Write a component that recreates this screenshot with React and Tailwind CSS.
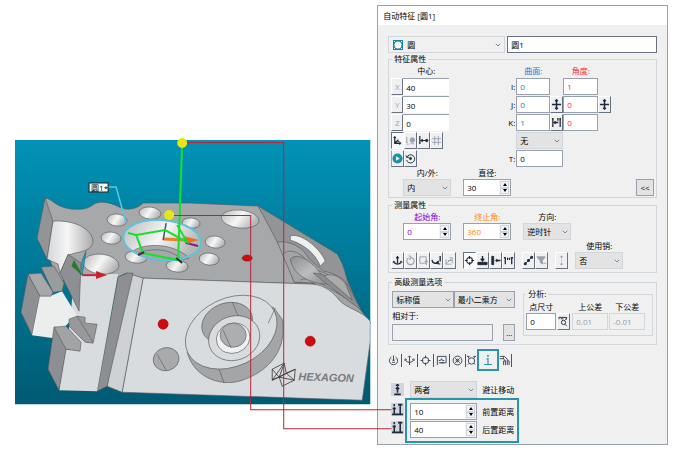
import { ChevronDown } from 'lucide-react'

// toolbar glyphs, all on a 12x12 grid
const ICONS = {
  axes: <><path d="M3 2v7h6M3 9l4-4" strokeWidth="1.4" /><path d="M1.5 3.5 3 1.5l1.5 2M8 7.5 10 9l-2 1.5M6 7h2" /></>,
  snap: <><path d="M2 2v6M1 8h2M2 10h2" /><circle cx="8" cy="5.500" r="2.5" fill="currentColor" /><path d="M6 9.5h4" /></>,
  span: <><path d="M2 1v8M1 9h2M4 6h6M5 4.5 3.5 6 5 7.5" strokeWidth="1.3" /><circle cx="9.500" cy="6" r="1.3" fill="currentColor" /></>,
  grid: <path d="M4 1v10M8 1v10M1 4h10M1 8h10" />,
  cycle: <><path d="M2 4.5A4.5 4.5 0 1 1 1.7 7.5" /><path d="M1 2.5 2 5l2.5-.5" /><circle cx="6" cy="6" r="1.2" fill="currentColor" /></>,
  move: <path d="M6 1v10M1 6h10M4.5 2.5 6 1l1.5 1.5M4.5 9.5 6 11l1.5-1.5" strokeWidth="1.6" />,
  flip: <path d="M2 1v10M10 1v10M1 2h2M9 2h2M4 6h4M5 4.500 3.500 6 5 7.500M7.500 1v3" strokeWidth="1.4" />,
  anchor: <><path d="M6 1v8M4.500 3h3M2 8c1 2.500 7 2.500 8 0" strokeWidth="1.4" /><path d="m1 8.500 1-2 1.500 1.500M11 8.500l-1-2-1.5 1.500" /></>,
  rotate: <path d="M4 3a4 4 0 1 0 4 0M4.500 .5 7 3 4.500 5" strokeWidth="1.2" />,
  region: <><path d="M2 2h7v7H2z" /><path d="M7 7h4M9 5v6" /></>,
  hook: <><path d="M1 5.5c1 4 4 4 6 3M10 1v6" strokeWidth="1.5" /><path d="M8 6.500V10L5.500 8.500zM9.500 9v1.500" fill="currentColor" /></>,
  probe: <><path d="M2 5v5h6M2 10l6-6M6 3h3v3" /><path d="M4 6h5v3" /></>,
  target: <><circle cx="6" cy="6" r="3.2" strokeWidth="1.2" /><path d="M6 1v3M6 8v3M1 6h3M8 6h3" strokeWidth="1.3" /></>,
  press: <><path d="M1 8h10v2.500H1z" fill="currentColor" /><path d="M6 1v5M4 4l2 2.500L8 4" strokeWidth="1.5" /></>,
  side: <><path d="M2 1.500h2v9H2z" fill="currentColor" /><path d="M8 4.500 6.500 6 8 7.500M6.500 6h5" strokeWidth="1.4" /></>,
  pair: <path d="M2.500 3v7M9.500 3v7M1 3h2M8.500 3H11M5 3v2.500M7 3v2.500" strokeWidth="1.4" />,
  points: <><path d="m2 10 8-8" /><path d="M1.500 8.500h2v2h-2zM5 5h2v2H5zM8.500 1.500h2v2h-2z" fill="currentColor" /></>,
  filter: <><path d="M1 2h9L7 6v4L4.500 8V6z" fill="currentColor" /><path d="M8 9h3" /></>,
  jump: <path d="M6 1v3M6 5.500v1M6 8v3M4.500 2.500 6 1l1.500 1.500M4.500 9.500 6 11l1.500-1.500" />,
  magnify: <><circle cx="6" cy="7" r="2.300" /><path d="m7.500 9 2 2M1 1.500h8M1 1.500v2M9 1v3M3 3h3M8 4l2-2" /></>,
  power: <><path d="M3.800 2.200a4.500 4.500 0 1 0 4.400 0" /><path d="M6 .5v6M4.500 5 6 6.500 7.500 5M4.500 8h3" /></>,
  paths: <path d="M6 11V1M4.500 2.500 6 1l1.500 1.500M1.500 5c0 3 4.500 2 4.500 4 0-2 4.500-1 4.500-4M.5 6l1-2 1.500 1.500M11.500 6l-1-2L9 5.500" />,
  locate: <><circle cx="6" cy="6" r="3.500" /><path d="M6 .5v3M6 8.500v3M.5 6h3M8.500 6h3" /></>,
  flag: <path d="M1.500 11V1.500h9.500v7H3M3 6h2l1-2 1 2h2M5 8.500h4" />,
  reel: <><circle cx="6" cy="6" r="4.800" /><path d="m3.500 3.500 5 5M8.500 3.500l-5 5" /><circle cx="6" cy="6" r="1.500" /></>,
  ring: <><circle cx="6" cy="6.500" r="3.500" /><path d="M1 1.500h3M8 1.500h3M2.500 2l1 2M9.500 2l-1 2M2 10.500l1.500-1.500M10 10.500 8.500 9" /></>,
  clear: <><path d="M2 10.500h8M6 4v6M4.500 5H6" strokeWidth="1.2" /><circle cx="6" cy="1.800" r=".6" fill="currentColor" /></>,
  robot: <path d="M1 1.500h5l3 3v2M1 4h4l2 3M5 1.500V4M5 11V6.500h2V11M9 11V6.500h2V11" />,
  single: <path d="M6 1v2M6 4v5M4.500 5.500 6 4l1.500 1.500M3 10.500h6M4.500 2h3" strokeWidth="1.4" />,
  height: <path d="M3 1v2M3 4v6M1.500 5h3M1 10.500h10M8.500 2v8M6.500 1.500h4" strokeWidth="1.4" />,
}

function Icon({ name, className = 'size-3' }) {
  return (
    <svg viewBox="0 0 12 12" className={className} fill="none" stroke="currentColor" aria-hidden="true">
      {ICONS[name]}
    </svg>
  )
}

function ToolButton({ name, label, dim, active }) {
  return (
    <button
      type="button"
      aria-label={label}
      className={`flex h-[17px] w-[13px] items-center justify-center border ${
        active ? 'border-t-gray-500 border-l-gray-500 border-r-white border-b-white bg-gray-50' : 'border-t-white border-l-white border-r-gray-500 border-b-gray-500'
      } ${dim ? 'text-gray-400' : 'text-gray-800'}`}
    >
      <Icon name={name} className="size-[11px] shrink-0" />
    </button>
  )
}

function Select({ label, value, className, tone = 'border-gray-300 bg-[#e3e3e3]' }) {
  return (
    <div className={`grid items-center ${className}`}>
      <select aria-label={label} className={`col-start-1 row-start-1 h-[17px] w-full appearance-none border pl-[3px] ${tone}`}>
        <option>{value}</option>
      </select>
      <ChevronDown className="pointer-events-none col-start-1 row-start-1 mr-[2px] size-2 justify-self-end text-gray-600" />
    </div>
  )
}

function TextBox({ label, value, className = '' }) {
  return (
    <input
      aria-label={label}
      defaultValue={value}
      className={`h-[17px] min-w-0 border border-gray-400 bg-white px-[3px] ${className}`}
    />
  )
}

function Spin({ label, value, className = 'w-12', color = '' }) {
  return (
    <div className={`flex h-[17px] border border-gray-400 bg-white ${className}`}>
      <input aria-label={label} defaultValue={value} className={`w-0 flex-1 px-[3px] ${color}`} />
      <div className="flex w-[11px] flex-col bg-gray-100 p-px">
        <button type="button" aria-label={`${label} +`} className="flex flex-1 items-center justify-center border border-gray-300">
          <svg viewBox="0 0 4 3" className="h-[3px] w-1"><path d="M0 3 2 0l2 3z" /></svg>
        </button>
        <button type="button" aria-label={`${label} -`} className="flex flex-1 items-center justify-center border border-gray-300">
          <svg viewBox="0 0 4 3" className="h-[3px] w-1"><path d="m0 0 2 3 2-3z" /></svg>
        </button>
      </div>
    </div>
  )
}

function Field({ label, color = '', children }) {
  return (
    <div className="flex flex-col">
      <span className={`h-3 text-center ${color}`}>{label}</span>
      {children}
    </div>
  )
}

const AXES = [['X', '40'], ['Y', '30'], ['Z', '0']]

const TOOLS = [
  [['anchor', '测针'], ['rotate', '旋转', true], ['region', '区域', true], ['hook', '回退'], ['probe', '探测', true]],
  [['target', '查找', false, true], ['press', '下压'], ['side', '侧向'], ['pair', '成对']],
  [['points', '点'], ['filter', '过滤', true]],
  [['jump', '跳转', true]],
]

const TABS = ['power', 'paths', 'locate', 'flag', 'reel']

const HOLES = [
  [117, 220, 10, 6], [150, 213, 11, 6], [191, 223, 9, 5], [111, 238, 10, 6],
  [136, 257, 11, 6], [177, 266, 11, 6], [215, 242, 10, 6], [209, 259, 10, 6], [240, 219, 19, 9],
]

function PartView() {
  return (
    <svg viewBox="15 140 355 264" className="relative h-auto w-full overflow-visible" role="img" aria-label="HEXAGON">
      <defs>
        <linearGradient id="sky" x1="0" y1="0" x2="0" y2="1">
          <stop offset="0" stopColor="#0093b7" />
          <stop offset="1" stopColor="#005a72" />
        </linearGradient>
        <linearGradient id="bore" x1="0" y1="0" x2="1" y2="0.3">
          <stop offset="0" stopColor="#b6b7b9" />
          <stop offset="0.55" stopColor="#f6f6f6" />
          <stop offset="1" stopColor="#b4b5b7" />
        </linearGradient>
        <linearGradient id="cove" x1="0" y1="0" x2="1" y2="0">
          <stop offset="0" stopColor="#d4d6d8" />
          <stop offset="0.45" stopColor="#f6f6f6" />
          <stop offset="1" stopColor="#a9aaac" />
        </linearGradient>
        <linearGradient id="pocket" x1="0" y1="0" x2="1" y2="1">
          <stop offset="0" stopColor="#8b8d90" />
          <stop offset="0.5" stopColor="#bcbdbf" />
          <stop offset="1" stopColor="#85878a" />
        </linearGradient>
        <clipPath id="view"><path d="M15 140h355v264H15z" /></clipPath>
      </defs>
      <path d="M15 140h355v264H15z" fill="url(#sky)" />

      <g clipPath="url(#view)" stroke="#55575a" strokeWidth=".6" strokeLinejoin="round">
        {/* top face */}
        <path d="M45 198c8 1 10 9 26 11 14 1 18-1 23-5 7-4 18-1 25 3 8 4 18 2 24-4l47 0 68 3 54 78-169-6-17-5-10 5-59 3-13-40z" fill="#a7a8aa" />
        {/* right flank */}
        <path d="M258 206 337 254c6 10 8 18 10 26l15 34 10 10-27-16-12-14-20-11-19-1-11-29z" fill="#929496" />
        <path d="M277 242c12-2 26 5 32 17l14 12c10 2 19 6 23 12l12 24 12 15-25-14-12-14-20-11-19-1z" fill="#a2a4a6" />
        <path d="M284 253c9-6 20 3 25 11 9 9 20 8 31 19M300 280c11-5 24 6 34 11l25 15" fill="none" />
        <path d="M290 236c10-4 30 12 35 25l-5 5c-5-13-17-22-30-26z" fill="#eeeff0" />
        <path d="M290 259c7-7 19 1 26 9 6 7 10 13 15 16-14 1-37-5-41-25z" fill="url(#pocket)" />
        <path d="M313 273c12 0 23 9 34 11l14 26-27-20z" fill="#8b8d90" />
        <path d="M324 276c7-4 16 1 21 7l7 17z" fill="#a9abad" />
        {/* front face */}
        <path d="m143 278 169 6c14 1 22 10 27 16 8 9 22 10 31 21v20l-8 59-240-8z" fill="#d9dcde" />
        <path d="m127 273 16 5-21 114-15-6z" fill="#cfd2d4" />
        <path d="m118 277 9-4 6 0-26 113-10 5z" fill="#8d8f92" />
        {/* left steps */}
        <path d="M82 274h36L97 391l-38-1 11-68 4-46z" fill="#d9dcde" stroke="none" />
        <path d="m45 198 8 23-6 38-10-21z" fill="#929496" />
        <path d="M53 221c17-1 38 5 40 20 0 9-13 11-18 12l-7 2-8 18-2-9-11-5z" fill="url(#cove)" />
        <path d="m68 254 13 9-2 48-19-38z" fill="#8d8f92" />
        <path d="m28 274 12 21-8 40-11-23z" fill="#8d8f92" />
        <path d="M40 295h12l10-4 17 28-9 2-16 17-22-3z" fill="#eceded" stroke="none" />
        <path d="m28 274 13-1 12 19-2 4H40z" fill="#a7a8aa" />
        <path d="m41 267 13-1 10 17-2 8-9 1z" fill="#999b9d" />
        <path d="m54 327 12 1 13 22-13-1-7 41-11-21z" fill="#8d8f92" />
        <path d="m54 327 12-1 15 16-1 9-14-2z" fill="#a1a3a5" />
        <path d="m69 319 8-3 8 1v6l12 1-4 19-8-1-16-16z" fill="#97999b" />
        <path d="m77 316 16 26" />

        {/* bores */}
        {HOLES.map(([cx, cy, rx, ry]) => (
          <ellipse key={`${cx}-${cy}`} cx={cx} cy={cy} rx={rx} ry={ry} fill="url(#bore)" transform={`rotate(6 ${cx} ${cy})`} />
        ))}
        <ellipse cx="101" cy="264" rx="18" ry="10" fill="url(#bore)" transform="rotate(6 101 264)" />
        <ellipse cx="162" cy="240" rx="39" ry="20" fill="url(#bore)" transform="rotate(5 162 240)" />
        <path d="M133 251c10-8 40-9 56 7-17 5-42 3-56-7z" fill="#a7a8aa" />
        <path d="M138 253c12-5 30-5 42 5" fill="none" />
        <ellipse cx="162" cy="240" rx="39" ry="20" fill="none" stroke="#5ec4d8" strokeWidth="2" transform="rotate(5 162 240)" />

        {/* boss */}
        <path d="M187 352c7 27 37 36 58 27 26-10 42-31 37-60l-9-12-70 28z" fill="#a3a5a7" />
        <ellipse cx="231" cy="332" rx="48" ry="34" fill="#d9dcde" transform="rotate(-25 231 332)" />
        <path d="m219 369 5 14M275 308l-7 15" />
        <ellipse cx="227" cy="323" rx="26" ry="20" fill="#a3a5a7" transform="rotate(-20 227 323)" />
        <path d="m232 302 7 16" />
        <ellipse cx="234" cy="338" rx="26" ry="22" fill="#d9dcde" transform="rotate(-20 234 338)" />
        <ellipse cx="233" cy="338" rx="17" ry="15" fill="#f1f1f1" transform="rotate(-20 233 338)" />
        <ellipse cx="233" cy="335" rx="13" ry="12" fill="#acaeb0" />
        <path d="m223 330 8 18" />
        <ellipse cx="166" cy="359" rx="13" ry="11.500" fill="#a8aaac" transform="rotate(-15 166 359)" />
        <path d="m157 354 9 16" />
        <g fill="#d10a10" stroke="#8d0a0e">
          <circle cx="163" cy="324" r="5" />
          <circle cx="310" cy="341" r="5" />
          <ellipse cx="247" cy="258" rx="5" ry="3" />
        </g>
      </g>

      {/* engraved mark */}
      <g fill="none" stroke="#333" strokeWidth=".8">
        <path d="m272 369 12-6 2 10 9-4-1 11-12 6-3-9-7 3zM272 369l7 8 15 3M284 363l-12 17 14-7 8 7M295 369l-16 8 5-14" />
      </g>
      <text x="298" y="380" transform="rotate(2 298 380)" className="font-['Liberation_Sans'] text-[11px] font-bold italic" fill="#777a7d">
        HEXAGON
      </text>

      {/* trihedrons */}
      <path d="M82 275h14" stroke="#c8232c" strokeWidth="2" />
      <path d="m96 271 11 4-11 4z" fill="#c8232c" />
      <path d="M82 275 74 261l-2 5 5 4z" fill="#287b2b" stroke="#287b2b" />
      <path d="m82 275 4-24-4 10-1 9" fill="#3f9fb5" stroke="#2b8096" />
      <path d="m163 239 22 1" stroke="#e8822a" strokeWidth="3" />
      <path d="m183 236 16 4-14 4z" fill="#e8701c" />
      <path d="m186 243 12 3" stroke="#7c2382" strokeWidth="2" />
      <path d="m163 240 3-17" stroke="#345a7c" strokeWidth="1.500" />

      {/* probe path */}
      <path d="M182 143l-4 117-35-7-7-18 29-5 22 12-10-17M128 233l8 2" fill="none" stroke="#16e02c" strokeWidth="2" />
      <path d="m176 258 6 5M138 255l6-3" stroke="#333" strokeWidth="2" />

      <path d="M108 187h8l10 36" fill="none" stroke="#5ec4e8" strokeWidth="1.500" />
      <path d="M89 183h19v9H89z" fill="#fff" stroke="#222" />
      <text x="91" y="191" className="text-[8px]">圆1*</text>

      {/* leaders to the distance fields */}
      <g fill="none" stroke="#b5263a" strokeWidth="1">
        <path d="M182 142.500h101.500v286H391" />
        <path d="M169 215.500h81.500v194H391" />
      </g>
      <circle cx="182" cy="143" r="5" fill="#e6e61a" />
      <circle cx="169" cy="215" r="5" fill="#e6e61a" />
    </svg>
  )
}

function FeatureGroup() {
  return (
    <fieldset className="h-[145px] border border-gray-300 px-[2px]">
      <legend className="ml-px px-[2px]">特征属性</legend>
      <div className="flex gap-[53px]">
        <div className="flex w-[58px] flex-col gap-px">
          <span className="h-3 pl-3 text-center">中心:</span>
          {AXES.map(([axis, value]) => (
            <div key={axis} className="flex">
              <button type="button" className="w-3 border border-t-white border-l-white border-r-gray-500 border-b-gray-500 text-gray-400">{axis}</button>
              <TextBox label={axis} value={value} className="flex-1 border-x-0 border-b-0" />
            </div>
          ))}
          <div className="flex">
            <ToolButton name="axes" label="坐标" active />
            <ToolButton name="snap" label="捕捉" dim />
            <ToolButton name="span" label="跨度" />
            <ToolButton name="grid" label="网格" dim />
          </div>
          <div className="flex">
            <button type="button" aria-label="测量" className="flex h-[17px] w-[13px] items-center justify-center border border-t-white border-l-gray-400 border-r-gray-500 border-b-gray-500">
              <svg viewBox="0 0 12 12" className="size-[11px] shrink-0">
                <circle cx="6" cy="6" r="5.500" fill="#1792a8" />
                <path d="M4.500 3.500 8.500 6l-4 2.500z" fill="#fff" />
              </svg>
            </button>
            <ToolButton name="cycle" label="重测" />
          </div>
        </div>

        <div className="grid grid-cols-[14px_34px_13px_35px_13px] content-start items-center gap-y-px">
          <span className="col-start-2 h-3 text-center text-sky-600">曲面:</span>
          <span className="col-start-4 h-3 text-center text-red-500">角度:</span>
          <span className="col-start-1 pr-px text-right">I:</span>
          <TextBox label="I" value="0" className="text-sky-600" />
          <TextBox label="角度 I" value="1" className="col-start-4 text-red-500" />
          <span className="col-start-1 pr-px text-right">J:</span>
          <TextBox label="J" value="0" className="text-sky-600" />
          <ToolButton name="move" label="移动" />
          <TextBox label="角度 J" value="0" className="text-red-500" />
          <ToolButton name="move" label="移动角度" />
          <span className="col-start-1 pr-px text-right">K:</span>
          <TextBox label="K" value="1" className="text-sky-600" />
          <ToolButton name="flip" label="翻转" />
          <TextBox label="角度 K" value="0" className="text-red-500" />
          <Select label="类型" value="无" className="col-span-2 col-start-2" />
          <span className="col-start-1 pr-px text-right">T:</span>
          <TextBox label="T" value="0" className="col-span-2" />
        </div>
      </div>

      <div className="flex items-end gap-3 pl-3">
        <Field label="内/外:"><Select label="内/外" value="内" className="w-12" /></Field>
        <Field label="直径:"><Spin label="直径" value="30" /></Field>
        <button type="button" className="ml-auto h-[17px] w-[18px] border border-gray-400 bg-[#e3e3e3]">&lt;&lt;</button>
      </div>
    </fieldset>
  )
}

function MeasureGroup() {
  return (
    <fieldset className="mt-px h-[74px] border border-gray-300 px-[2px]">
      <legend className="ml-px px-[2px]">测量属性</legend>
      <div className="flex gap-3 pl-3">
        <Field label="起始角:" color="text-purple-700"><Spin label="起始角" value="0" color="text-purple-700" /></Field>
        <Field label="终止角:" color="text-orange-400"><Spin label="终止角" value="360" color="text-orange-400" /></Field>
        <Field label="方向:"><Select label="方向" value="逆时针" className="w-12" /></Field>
      </div>
      <div className="flex items-end gap-[7px]">
        {TOOLS.map((group) => (
          <div key={group[0][0]} className="flex">
            {group.map(([name, label, dim, active]) => (
              <ToolButton key={name} name={name} label={label} dim={dim} active={active} />
            ))}
          </div>
        ))}
        <Field label="使用销:"><Select label="使用销" value="否" className="w-12" /></Field>
      </div>
    </fieldset>
  )
}

function AdvancedGroup() {
  return (
    <fieldset className="mt-[3px] h-[69px] border border-gray-300 px-[3px]">
      <legend className="px-[2px]">高级测量选项</legend>
      <div className="flex gap-2">
        <div className="flex w-[123px] flex-col pt-[3px]">
          <div className="flex">
            <Select label="标称" value="标称值" className="flex-1" tone="border-gray-400 bg-[#e3e3e3]" />
            <Select label="算法" value="最小二乘方" className="flex-1" tone="border-gray-400 bg-[#e3e3e3]" />
          </div>
          <label htmlFor="relative" className="my-[2px] h-3">相对于:</label>
          <div className="flex justify-between">
            <input id="relative" className="h-[17px] w-[101px] border border-gray-400" />
            <button type="button" className="w-3 border border-gray-400 bg-[#e3e3e3]">...</button>
          </div>
        </div>
        <fieldset className="h-12 flex-1 border border-gray-300 px-[2px]">
          <legend className="px-[2px]">分析:</legend>
          <div className="grid grid-cols-[30px_14px_36px_36px] gap-x-px pt-px">
            <span className="h-3 text-center">点尺寸</span>
            <span className="col-start-3 h-3 text-center">上公差</span>
            <span className="h-3 text-center">下公差</span>
            <TextBox label="点尺寸" value="0" />
            <ToolButton name="magnify" label="缩放" />
            <input aria-label="上公差" disabled defaultValue="0.01" className="min-w-0 border border-gray-300 px-[3px] text-gray-400" />
            <input aria-label="下公差" disabled defaultValue="-0.01" className="min-w-0 border border-gray-300 px-[3px] text-gray-400" />
          </div>
        </fieldset>
      </div>
    </fieldset>
  )
}

function TabBar() {
  return (
    <nav className="mt-1 -ml-[2px] flex h-[22px] items-center text-gray-700">
      {TABS.map((name) => (
        <button key={name} type="button" aria-label={name} className="flex h-[13px] w-4 items-center justify-center border-r border-gray-600">
          <Icon name={name} className="size-[11px] shrink-0" />
        </button>
      ))}
      <button type="button" aria-label="ring" className="w-[11px]"><Icon name="ring" className="size-[11px]" /></button>
      <button type="button" aria-label="clear" className="flex size-[22px] items-center justify-center border-2 border-[#2796aa] text-[#2796aa]">
        <Icon name="clear" />
      </button>
      <button type="button" aria-label="robot" className="flex h-[13px] w-[13px] items-center border-r border-gray-600">
        <Icon name="robot" className="size-[11px] shrink-0" />
      </button>
    </nav>
  )
}

function AvoidancePane() {
  return (
    <div className="mt-[10px] flex gap-px pb-px pl-[3px] whitespace-nowrap">
      <div className="flex w-[13px] flex-col gap-[5px] pt-[2px] text-gray-800">
        <Icon name="single" className="h-[13px] w-full bg-gray-300" />
        <Icon name="height" className="mt-[2px] h-[13px] w-full bg-gray-300" />
        <Icon name="height" className="h-[13px] w-full bg-gray-300" />
      </div>
      <div>
        <div className="flex items-center gap-[5px] pl-[5px]">
          <Select label="避让移动" value="两者" className="w-[67px]" />
          <span>避让移动</span>
        </div>
        <div className="flex flex-col gap-px border-2 border-[#2796aa] px-[3px] py-[3px]">
          <div className="flex items-center gap-[5px]">
            <Spin label="前置距离" value="10" className="w-[67px]" />
            <span>前置距离</span>
          </div>
          <div className="flex items-center gap-[5px]">
            <Spin label="后置距离" value="40" className="w-[67px]" />
            <span>后置距离</span>
          </div>
        </div>
      </div>
    </div>
  )
}

export default function App() {
  return (
    <main className="grid min-h-screen grid-cols-[11fr_9fr] items-start gap-[7px] bg-white pt-[5px] pr-[18px] pl-[15px] font-['Open_Sans','Noto_Sans_CJK_SC',sans-serif] text-[8px] leading-3 text-black">
      <figure className="relative z-10 pt-[135px]">
        <PartView />
      </figure>

      <section className="border border-gray-400 bg-[#f0f0f0]">
        <h1 className="h-[19px] bg-white px-[5px] leading-[19px]">自动特征 [圆1]</h1>
        <div className="px-[10px] pt-[11px]">
          <div className="flex gap-[2px]">
            <div className="flex w-[117px] items-center border border-gray-300 pl-1">
              <svg viewBox="0 0 10 10" className="size-[10px] shrink-0">
                <path d="M0 0h10v10H0z" fill="#16849c" />
                <circle cx="5" cy="5" r="3.500" fill="#fff" />
                <path d="M1 1h1v1H1zM8 1h1v1H8zM1 8h1v1H1zM8 8h1v1H8z" fill="#fff" />
              </svg>
              <Select label="特征类型" value="圆" className="-my-px flex-1" tone="border-transparent" />
            </div>
            <TextBox label="名称" value="圆1" className="flex-1 border-gray-500" />
          </div>

          <FeatureGroup />
          <MeasureGroup />
          <AdvancedGroup />
          <TabBar />
          <AvoidancePane />
        </div>
      </section>
    </main>
  )
}
